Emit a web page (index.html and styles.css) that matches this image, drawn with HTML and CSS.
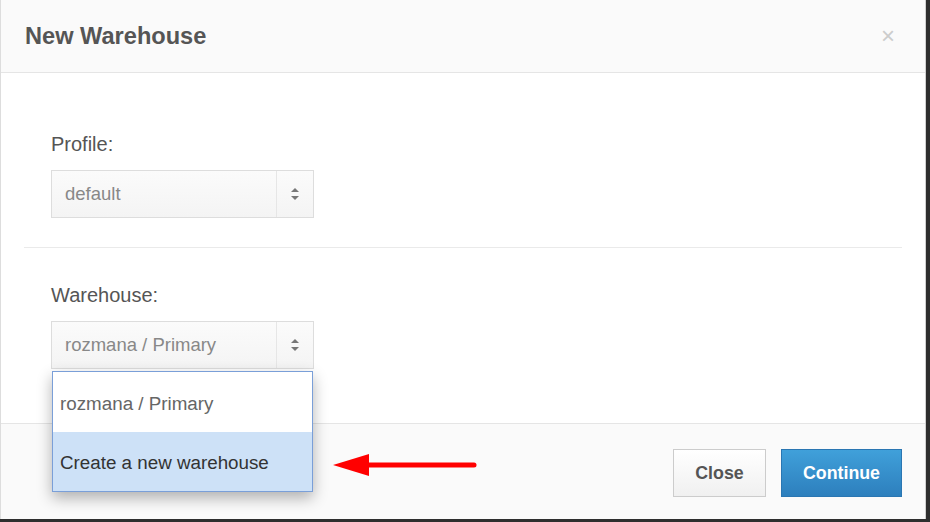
FILE: index.html
```html
<!DOCTYPE html>
<html lang="en">
<head>
    <meta charset="UTF-8">
    <title>New Warehouse</title>
    <link rel="stylesheet" href="styles.css">
</head>
<body>
    <div class="modal">
        <header class="modal-header">
            <h1>New Warehouse</h1>
            <span class="close-x">&times;</span>
        </header>
        <main class="modal-body">
            <div class="field">
                <label>Profile:</label>
                <div class="select">
                    <span class="select-value">default</span>
                    <span class="select-arrows"><i class="up"></i><i class="down"></i></span>
                </div>
            </div>
            <hr>
            <div class="field">
                <label>Warehouse:</label>
                <div class="select">
                    <span class="select-value">rozmana / Primary</span>
                    <span class="select-arrows"><i class="up"></i><i class="down"></i></span>
                    <ul class="dropdown">
                        <li>rozmana / Primary</li>
                        <li class="active">Create a new warehouse</li>
                    </ul>
                </div>
            </div>
        </main>
        <footer class="modal-footer">
            <svg class="pointer" width="150" height="30" viewBox="0 0 150 30">
                <line x1="30" y1="15" x2="141" y2="15" stroke="#f00" stroke-width="5" stroke-linecap="round"/>
                <polygon points="0,15 36,4 36,26" fill="#f00"/>
            </svg>
            <button class="btn">Close</button>
            <button class="btn btn-primary">Continue</button>
        </footer>
    </div>
</body>
</html>
```

FILE: styles.css
```css
/* Page */
body {
    margin: 0;
    background-color: #2e2e2e;
    font-family: 'Liberation Sans', Arial, sans-serif;
    color: #555;
}

.modal {
    width: 924px;
    height: 519px;
    background: white;
    border-left: 1px solid #ddd;
    border-right: 1px solid #d0d0d0;
    display: flex;
    flex-direction: column;
    position: relative;
}

/* Header */
.modal-header {
    height: 72px;
    background-color: #fafafa;
    border-bottom: 1px solid #e5e5e5;
    display: flex;
    align-items: center;
    justify-content: space-between;
    padding: 0 30px 0 24px;
}

.modal-header h1 {
    margin: 0;
    font-size: 23.6px;
    font-weight: bold;
    color: #555;
}

.close-x {
    font-size: 24px;
    color: #ccc;
}

/* Body */
.modal-body {
    flex: 1;
    padding: 60px 23px 0 22px;
}

.field {
    padding-left: 28px;
    display: flex;
    flex-direction: column;
    align-items: flex-start;
}

.field label {
    font-size: 20px;
    line-height: 22px;
    margin-bottom: 15px;
}

hr {
    border: none;
    border-top: 1px solid #eaeaea;
    margin: 29px 0 36px 1px;
}

.select {
    position: relative;
    width: 261px;
    height: 46px;
    border: 1px solid #ddd;
    background: linear-gradient(#fbfbfb, #f4f4f4);
    display: flex;
    align-items: center;
}

.select-value {
    flex: 1;
    padding-left: 13px;
    font-size: 18.5px;
    color: #888;
}

.select-arrows {
    width: 36px;
    height: 100%;
    border-left: 1px solid #e6e6e6;
    display: flex;
    flex-direction: column;
    align-items: center;
    justify-content: center;
    gap: 4px;
}

.select-arrows i {
    width: 0;
    height: 0;
    border-left: 4px solid transparent;
    border-right: 4px solid transparent;
}

.select-arrows .up {
    border-bottom: 4px solid #777;
}

.select-arrows .down {
    border-top: 4px solid #777;
}

/* Dropdown */
.dropdown {
    position: absolute;
    top: 49px;
    left: 0;
    width: 259px;
    margin: 0;
    padding: 0;
    list-style: none;
    background: white;
    border: 1px solid #7a9fd8;
    box-shadow: 0 6px 14px rgba(0, 0, 0, 0.3);
    z-index: 2;
}

.dropdown li {
    height: 60px;
    line-height: 64px;
    padding-left: 7px;
    font-size: 18.8px;
    color: #666;
}

.dropdown li.active {
    height: 59px;
    line-height: 61px;
    background-color: #cde1f7;
    color: #333;
}

/* Footer */
.modal-footer {
    height: 96px;
    box-sizing: border-box;
    background-color: #fafafa;
    border-top: 1px solid #e5e5e5;
    display: flex;
    justify-content: flex-end;
    align-items: flex-start;
    gap: 15px;
    padding: 25px 23px 0;
    position: relative;
}

.btn {
    height: 48px;
    padding: 0 16px;
    font-family: 'Liberation Sans', Arial, sans-serif;
    font-size: 17.8px;
    font-weight: bold;
    color: #555;
    background: linear-gradient(#fff, #f0f0f0);
    border: 1px solid #ccc;
    border-radius: 0;
}

.btn-primary {
    width: 121px;
    color: white;
    background: linear-gradient(#40a0da, #2d7fbd);
    border-color: #2a76b2;
}

.btn:first-of-type {
    width: 93px;
}

.pointer {
    position: absolute;
    left: 332px;
    top: 26px;
}
```
